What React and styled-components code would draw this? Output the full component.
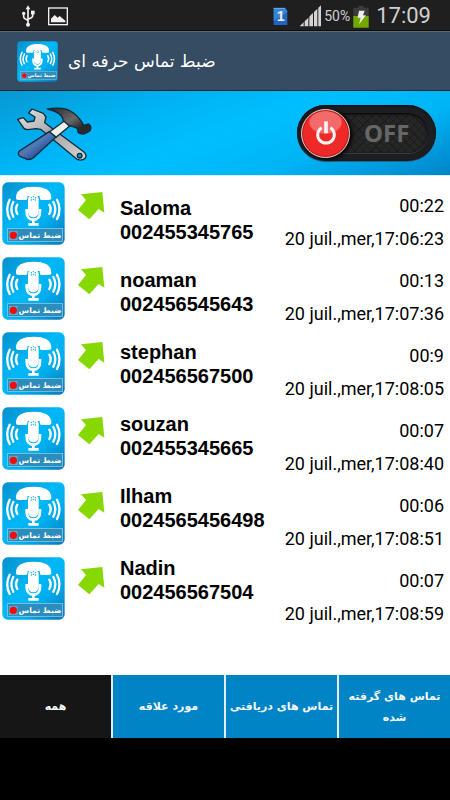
import * as React from 'react'
import styled, { createGlobalStyle } from 'styled-components'

const GlobalStyle = createGlobalStyle`
  * {
    box-sizing: border-box;
  }

  body {
    margin: 0;
    background: #000;
    font-family: Roboto, 'DejaVu Sans', sans-serif;
  }

  ul {
    margin: 0;
    padding: 0;
    list-style: none;
  }

  svg {
    display: block;
    flex: none;
  }
`

const Screen = styled.div`
  display: flex;
  flex-direction: column;
  min-height: 100vh;
`

const StatusBar = styled.div`
  display: flex;
  justify-content: space-between;
  height: 31px;
  padding: 2px 19px 0 21px;
  background: #1f1f1f;
  border-bottom: 1px solid #0c0c0c;
  color: #d0d0d0;
`

const StatusGroup = styled.div`
  display: flex;
  align-items: center;
  gap: ${(props) => props.$gap};
`

const Signal = styled.div`
  display: flex;
  align-items: center;
  gap: 3px;
  margin-left: 8px;
`

const Percent = styled.span`
  font-size: 14px;
  line-height: 20px;
`

const Clock = styled.span`
  margin-left: 4px;
  font-size: 22px;
  line-height: 28px;
`

const Header = styled.header`
  display: flex;
  align-items: center;
  gap: 10px;
  height: 60px;
  padding: 0 17px;
  background: #354c62;
  border-top: 1px solid #5c6c78;
  border-bottom: 1px solid #1c2632;
`

const Title = styled.h1`
  margin: 0;
  color: #fff;
  font-family: 'DejaVu Sans', sans-serif;
  font-size: 17px;
  font-weight: normal;
  line-height: 28px;
`

const Toolbar = styled.div`
  display: flex;
  justify-content: space-between;
  align-items: center;
  height: 85px;
  padding: 0 14px 0 16px;
  background: linear-gradient(
    160deg,
    #0898d2 0%,
    #00b2f3 28%,
    #00bfff 50%,
    #00b4f5 72%,
    #0084c8 100%
  );
  border-bottom: 1px solid #d8eefa;
`

const ToolsButton = styled.button`
  padding: 0;
  border: 0;
  background: none;
  cursor: pointer;
`

const Switch = styled.label`
  display: flex;
  align-items: center;
  width: 139px;
  height: 56px;
  padding: 0 4px;
  border-radius: 28px;
  background: #1d1e22;
  box-shadow: inset 0 1px 2px #08090b, 0 1px 0 #21658b;
  cursor: pointer;
`

const SwitchInput = styled.input`
  position: absolute;
  opacity: 0;
  margin: 0;
`

const Track = styled.span`
  display: flex;
  flex: 1;
  align-items: center;
  height: 40px;
  margin: 0 4px 0 -26px;
  padding-left: 40px;
  border-radius: 20px;
  background: repeating-linear-gradient(
      45deg,
      transparent 0 5px,
      #1d1d1d 5px 6px
    ),
    repeating-linear-gradient(-45deg, #262626 0 5px, #1d1d1d 5px 6px);
  box-shadow: inset 0 1px 3px #000, 0 1px 0 #3a3b3e;
  color: #666;
  font-family: 'Noto Sans', sans-serif;
  font-size: 24px;
  font-weight: bold;
  line-height: 40px;
`

const Knob = styled.span`
  position: relative;
  display: flex;
  justify-content: center;
  align-items: center;
  flex: none;
  width: 49px;
  height: 49px;
  border: 1px solid #e0d4d4;
  border-radius: 50%;
  background: radial-gradient(
      ellipse 17px 12px at 50% 26%,
      rgba(255, 255, 255, 0.3) 0 90%,
      transparent 100%
    ),
    #ef2828;
  box-shadow: inset 0 0 0 1px #b41c1c, 2px 1px 4px #000;
`

const Calls = styled.main`
  display: grid;
  grid-template-columns: 120px auto 1fr;
  flex: 1;
  align-items: start;
  background: #fff;
  color: #000;
`

const CallMedia = styled.li`
  display: flex;
  align-items: flex-start;
  gap: 13px;
  height: 75px;
  padding: 6px 0 0 2px;

  svg + svg {
    margin-top: 10px;
  }
`

const Contacts = styled.ul`
  display: grid;
  gap: 24px;
  padding-top: 20px;
`

const Contact = styled.li`
  font-family: 'Liberation Sans', Arial, sans-serif;
  font-size: 20px;
  font-weight: bold;
  line-height: 24px;
`

const CallTime = styled.li`
  display: grid;
  justify-items: end;
  align-content: start;
  gap: 9px;
  height: 75px;
  padding: 18px 6px 0 0;
  font-size: 18px;
  line-height: 24px;
  white-space: nowrap;
`

const Tabs = styled.nav`
  display: grid;
  grid-template-columns: repeat(4, 1fr);
  gap: 2px;
  height: 63px;
  background: #e4ecf2;
`

const Tab = styled.button`
  padding: 0 2px;
  border: 0;
  background: ${(props) => (props.$active ? '#161616' : '#0084c6')};
  color: #f4f8fb;
  font-family: 'DejaVu Sans', sans-serif;
  font-size: 11px;
  font-weight: bold;
  line-height: 21px;
  cursor: pointer;
`

const BottomBar = styled.footer`
  height: 62px;
  background: #000;
`

const AppLogo = ({ size }) => (
  <svg width={size} height={size} viewBox='6 17 189 189'>
    <defs>
      <linearGradient id='tile' x1='0' y1='0' x2='1' y2='1'>
        <stop offset='0' stopColor='#0690cc' />
        <stop offset='0.45' stopColor='#00b8f8' />
        <stop offset='0.65' stopColor='#00aeee' />
        <stop offset='1' stopColor='#0878b8' />
      </linearGradient>
    </defs>
    <rect x='7' y='18' width='187' height='187' rx='16' fill='url(#tile)' />
    <path
      d='M48 66C46 40 70 31 101 31s55 9 53 35c0 4-3 5-8 5h-20c-7 0-6-5-7-12H83c-1 7 0 12-7 12H56c-5 0-8-1-8-5z'
      fill='#fff'
    />
    <rect x='84' y='53' width='32' height='70' rx='16' fill='#fff' />
    <g fill='#0aa4e2'>
      <circle cx='94' cy='64' r='2' />
      <circle cx='100' cy='61' r='2' />
      <circle cx='106' cy='64' r='2' />
      <circle cx='94' cy='71' r='2' />
      <circle cx='100' cy='69' r='2' />
      <circle cx='106' cy='71' r='2' />
    </g>
    <path
      d='M80 98v8c0 15 8 24 20 24s20-9 20-24v-8'
      fill='none'
      stroke='#fff'
      strokeWidth='8'
    />
    <path d='M100 128v15M85 144h31' fill='none' stroke='#fff' strokeWidth='8' />
    <path
      d='M52 85q-8 14 0 28M40 77q-12 22 0 44M29 70q-15 29 0 58M148 85q8 14 0 28M160 77q12 22 0 44M171 70q15 29 0 58'
      fill='none'
      stroke='#fff'
      strokeWidth='7'
      strokeLinecap='round'
    />
    <rect x='23' y='157' width='165' height='38' fill='#2c8cbc' stroke='#9fd0e8' strokeWidth='2' />
    <rect x='27' y='164' width='26' height='27' fill='#59a8cf' />
    <circle cx='40' cy='177' r='11' fill='#f50a0a' />
    <text
      x='120'
      y='184'
      textAnchor='middle'
      fill='#fff'
      fontFamily='DejaVu Sans, sans-serif'
      fontSize='23'
      fontWeight='bold'
      direction='rtl'
    >
      ضبط تماس
    </text>
  </svg>
)

const OutgoingArrow = () => (
  <svg width='27' height='28' viewBox='234 47 81 84'>
    <path d='M243 54L307 47 313 109 296 98 268 129 234 101 258 71z' fill='#86d800' />
  </svg>
)

const UsbIcon = () => (
  <svg width='15' height='22' viewBox='63 14 45 66' fill='none' stroke='#f2f2f2'>
    <path d='M84 24v46M71 40v9q0 4 4 6l9 6M98 38v8q0 4-4 6l-10 5' strokeWidth='5' />
    <g fill='#f2f2f2' stroke='none'>
      <path d='M84 15l7 12H77z' />
      <circle cx='84' cy='73' r='6' />
      <circle cx='71' cy='39' r='5' />
      <path d='M93 31h11v11H93z' />
    </g>
  </svg>
)

const PictureIcon = () => (
  <svg width='20' height='19' viewBox='0 0 60 57'>
    <rect x='2' y='3' width='56' height='50' fill='none' stroke='#f2f2f2' strokeWidth='4' />
    <path d='M9 46V35l11-11 9 8 6-5 17 14v5z' fill='#f2f2f2' />
  </svg>
)

const SimIcon = () => (
  <svg width='15' height='19' viewBox='0 0 45 57'>
    <path d='M2 3h34l7 9v42H2z' fill='#1e66c0' />
    <path d='M2 3h34l7 9v3L2 42z' fill='#3485d6' />
    <path d='M2 4h34' stroke='#6db0ea' strokeWidth='3' />
    <text
      x='23'
      y='43'
      textAnchor='middle'
      fill='#eee'
      fontFamily='Liberation Sans, sans-serif'
      fontSize='43'
      fontWeight='bold'
    >
      1
    </text>
  </svg>
)

const SignalIcon = () => (
  <svg width='22' height='22' viewBox='0 0 66 66' fill='#d4d4d4'>
    <path d='M2 64L14 52v12zM17 49l11-11v26H17zM31 35l5-6 6-5v40H31zM45 21l10-10v53H45zM58 8l8-7v63h-8z' />
  </svg>
)

const BatteryIcon = () => (
  <svg width='16' height='23' viewBox='0 0 48 69'>
    <path d='M16 2h16v6h15v60H1V8h15z' fill='#3b3b3b' />
    <path d='M1 33h46v35H1z' fill='#72a800' />
    <path d='M18 17h17l-5 14h9L18 58l5-20h-9z' fill='#eee' />
  </svg>
)

const ToolsIcon = () => (
  <svg width='76' height='56' viewBox='48 48 228 168'>
    <defs>
      <linearGradient id='steel' x1='0' y1='0' x2='1' y2='1'>
        <stop offset='0' stopColor='#e4e4e4' />
        <stop offset='0.4' stopColor='#b4b4b4' />
        <stop offset='0.5' stopColor='#8c8c8c' />
        <stop offset='0.6' stopColor='#b0b0b0' />
        <stop offset='1' stopColor='#d8d8d8' />
      </linearGradient>
      <linearGradient id='head' x1='0' y1='0' x2='1' y2='1'>
        <stop offset='0' stopColor='#222' />
        <stop offset='0.5' stopColor='#6a6a6a' />
        <stop offset='0.75' stopColor='#2a2a2a' />
      </linearGradient>
      <linearGradient id='grip' x1='0' y1='0' x2='1' y2='1'>
        <stop offset='0.2' stopColor='#3c66a8' />
        <stop offset='0.45' stopColor='#5479b8' />
        <stop offset='0.7' stopColor='#2a5090' />
      </linearGradient>
    </defs>
    <g stroke='#0c2c3c' strokeWidth='4' strokeLinejoin='round'>
      <path
        d='M53 91L70 86 82 99 102 96 105 84 86 72 96 60 130 73 138 84 134 101 251 188q11 9 5 19-9 10-25 4L122 121 108 119 83 122q-8 0-12-5z'
        fill='url(#steel)'
      />
      <circle cx='239' cy='200' r='7' fill='#0494cc' />
      <path d='M193 96L210 110 168 145 148 129z' fill='#eef0e8' />
      <path
        d='M148 128L168 144 102 205q-8 8-20 6l-22-9q-9-7-2-16z'
        fill='url(#grip)'
      />
      <path
        d='M142 60q32-6 59 1 22 10 33 24 10 10 17 24l15-4q8 6 6 16-3 8-16 12-10 5-22-3 1-12-7-14-10-4-20-6l-18-16q0-22-47-34z'
        fill='url(#head)'
      />
    </g>
  </svg>
)

const PowerIcon = () => (
  <svg width='22' height='24' viewBox='0 0 66 72' fill='none' stroke='#f4f4f4'>
    <path d='M20 20a25 25 0 1 0 26 0' strokeWidth='9' />
    <path d='M33 1v36' strokeWidth='11' />
  </svg>
)

const calls = [
  { name: 'Saloma', phone: '002455345765', length: '00:22', date: '20 juil.,mer,17:06:23' },
  { name: 'noaman', phone: '002456545643', length: '00:13', date: '20 juil.,mer,17:07:36' },
  { name: 'stephan', phone: '002456567500', length: '00:9', date: '20 juil.,mer,17:08:05' },
  { name: 'souzan', phone: '002455345665', length: '00:07', date: '20 juil.,mer,17:08:40' },
  { name: 'Ilham', phone: '0024565456498', length: '00:06', date: '20 juil.,mer,17:08:51' },
  { name: 'Nadin', phone: '002456567504', length: '00:07', date: '20 juil.,mer,17:08:59' },
]

const tabs = ['همه', 'مورد علاقه', 'تماس های دریافتی', 'تماس های گرفته شده']

const App = () => {
  const [active, setActive] = React.useState(0)

  return (
    <Screen>
      <GlobalStyle />
      <StatusBar>
        <StatusGroup $gap='12px'>
          <UsbIcon />
          <PictureIcon />
        </StatusGroup>
        <StatusGroup $gap='3px'>
          <SimIcon />
          <Signal>
            <SignalIcon />
            <Percent>50%</Percent>
          </Signal>
          <BatteryIcon />
          <Clock>17:09</Clock>
        </StatusGroup>
      </StatusBar>

      <Header>
        <AppLogo size={41} />
        <Title dir='rtl'>ضبط تماس حرفه ای</Title>
      </Header>

      <Toolbar>
        <ToolsButton>
          <ToolsIcon />
        </ToolsButton>
        <Switch>
          <SwitchInput type='checkbox' />
          <Knob>
            <PowerIcon />
          </Knob>
          <Track>OFF</Track>
        </Switch>
      </Toolbar>

      <Calls>
        <ul>
          {calls.map((call) => (
            <CallMedia key={call.date}>
              <AppLogo size={63} />
              <OutgoingArrow />
            </CallMedia>
          ))}
        </ul>
        <Contacts>
          {calls.map((call) => (
            <Contact key={call.date}>
              <div>{call.name}</div>
              <div>{call.phone}</div>
            </Contact>
          ))}
        </Contacts>
        <ul>
          {calls.map((call) => (
            <CallTime key={call.date}>
              <span>{call.length}</span>
              <span>{call.date}</span>
            </CallTime>
          ))}
        </ul>
      </Calls>

      <Tabs>
        {tabs.map((tab, i) => (
          <Tab key={tab} dir='rtl' $active={i === active} onClick={() => setActive(i)}>
            {tab}
          </Tab>
        ))}
      </Tabs>
      <BottomBar />
    </Screen>
  )
}

export default App
